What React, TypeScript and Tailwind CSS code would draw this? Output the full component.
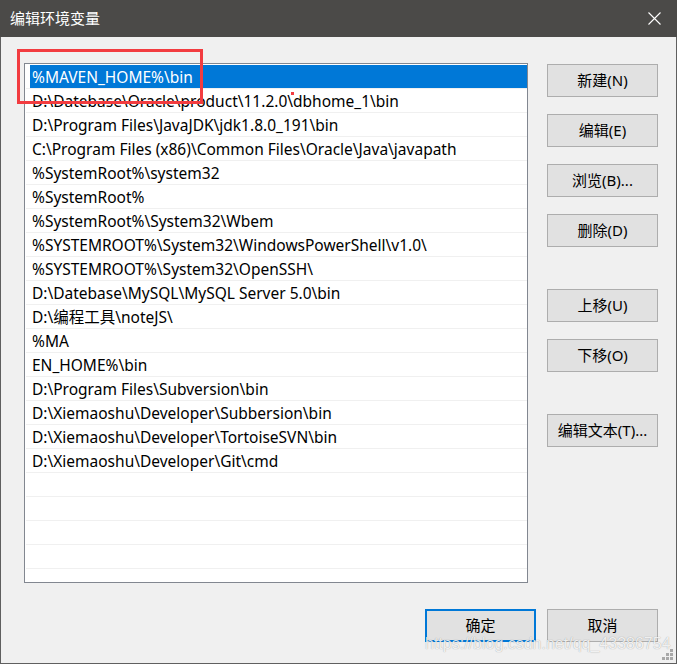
import React from "react";

const rows = [
  "%MAVEN_HOME%\\bin",
  "D:\\Datebase\\Oracle\\product\\11.2.0\\dbhome_1\\bin",
  "D:\\Program Files\\JavaJDK\\jdk1.8.0_191\\bin",
  "C:\\Program Files (x86)\\Common Files\\Oracle\\Java\\javapath",
  "%SystemRoot%\\system32",
  "%SystemRoot%",
  "%SystemRoot%\\System32\\Wbem",
  "%SYSTEMROOT%\\System32\\WindowsPowerShell\\v1.0\\",
  "%SYSTEMROOT%\\System32\\OpenSSH\\",
  "D:\\Datebase\\MySQL\\MySQL Server 5.0\\bin",
  "D:\\编程工具\\noteJS\\",
  "%MA",
  "EN_HOME%\\bin",
  "D:\\Program Files\\Subversion\\bin",
  "D:\\Xiemaoshu\\Developer\\Subbersion\\bin",
  "D:\\Xiemaoshu\\Developer\\TortoiseSVN\\bin",
  "D:\\Xiemaoshu\\Developer\\Git\\cmd",
  "",
  "",
  "",
  "",
  "",
];

function Btn({ label, primary = false }: { label: string; primary?: boolean }) {
  return (
    <div
      className={
        "w-[111px] h-[33px] flex items-center justify-center bg-[#e1e1e1] text-[15px] text-black " +
        (primary ? "border-2 border-[#0078d7]" : "border border-[#adadad]")
      }
    >
      {label}
    </div>
  );
}

export default function App() {
  return (
    <div
      className="relative w-[677px] h-[664px] flex flex-col bg-[#f0f0f0] overflow-hidden"
      style={{ fontFamily: '"Noto Sans", "Noto Sans CJK SC", sans-serif' }}
    >
      {/* Title bar */}
      <div className="h-[37px] shrink-0 bg-[#4b4a48] flex items-center justify-between pl-[10px] pr-[16px]">
        <span className="text-white text-[15px] leading-none">编辑环境变量</span>
        <svg width="13" height="13" viewBox="0 0 13 13" className="block">
          <path d="M0.5 0.5 L12.5 12.5 M12.5 0.5 L0.5 12.5" stroke="#ffffff" strokeWidth="1.1" fill="none" />
        </svg>
      </div>

      {/* Body */}
      <div className="flex-1 flex flex-col border-x border-b border-[#5f5f5f] pl-[23px] pt-[26px] pr-[18px]">
        <div className="flex">
          {/* List */}
          <div className="w-[504px] h-[520px] pt-[1px] border border-[#828790] bg-white overflow-hidden text-[15.5px] text-black">
            {rows.map((r, i) => (
              <div key={i} className="h-[24px] ml-[1px] border-b border-[#f0f0f0]">
                <div
                  className={
                    "h-full ml-[4px] pl-[2px] pt-[2px] flex items-center whitespace-nowrap " +
                    (i === 0 ? "bg-[#0078d7] text-white" : "")
                  }
                >
                  {r}
                </div>
              </div>
            ))}
          </div>

          {/* Side buttons */}
          <div className="ml-[19px] mt-[1px] flex flex-col">
            <div className="flex flex-col gap-[17px]">
              <Btn label="新建(N)" />
              <Btn label="编辑(E)" />
              <Btn label="浏览(B)..." />
              <Btn label="删除(D)" />
            </div>
            <div className="mt-[42px] flex flex-col gap-[17px]">
              <Btn label="上移(U)" />
              <Btn label="下移(O)" />
            </div>
            <div className="mt-[42px]">
              <Btn label="编辑文本(T)..." />
            </div>
          </div>
        </div>

        {/* Bottom buttons */}
        <div className="mt-[26px] flex justify-end gap-[11px]">
          <Btn label="确定" primary />
          <Btn label="取消" />
        </div>
      </div>

      {/* Red annotation rectangle */}
      <div className="absolute left-[17px] top-[49px] w-[186px] h-[55px] border-[3px] border-[#f23c40] pointer-events-none" />
      {/* Small red mark */}
      <div className="absolute left-[291px] top-[92px] w-[3px] h-[3px] bg-[#f23c40]" />

      {/* Watermark */}
      <div
        className="absolute left-[425px] top-[636px] text-[16px] leading-none text-white/85 whitespace-nowrap [text-shadow:0_0_1px_rgba(0,0,0,0.4)]"
        style={{ fontFamily: '"Liberation Sans", Arial, sans-serif' }}
      >
        https://blog.csdn.net/qq_43386754
      </div>

      {/* Resize grip */}
      <svg className="absolute right-[3px] bottom-[3px]" width="12" height="12" viewBox="0 0 12 12">
        <rect x="8" y="0" width="3" height="3" fill="#a8a8a8" />
        <rect x="4" y="4" width="3" height="3" fill="#a8a8a8" />
        <rect x="8" y="4" width="3" height="3" fill="#a8a8a8" />
        <rect x="0" y="8" width="3" height="3" fill="#a8a8a8" />
        <rect x="4" y="8" width="3" height="3" fill="#a8a8a8" />
        <rect x="8" y="8" width="3" height="3" fill="#a8a8a8" />
      </svg>
    </div>
  );
}
